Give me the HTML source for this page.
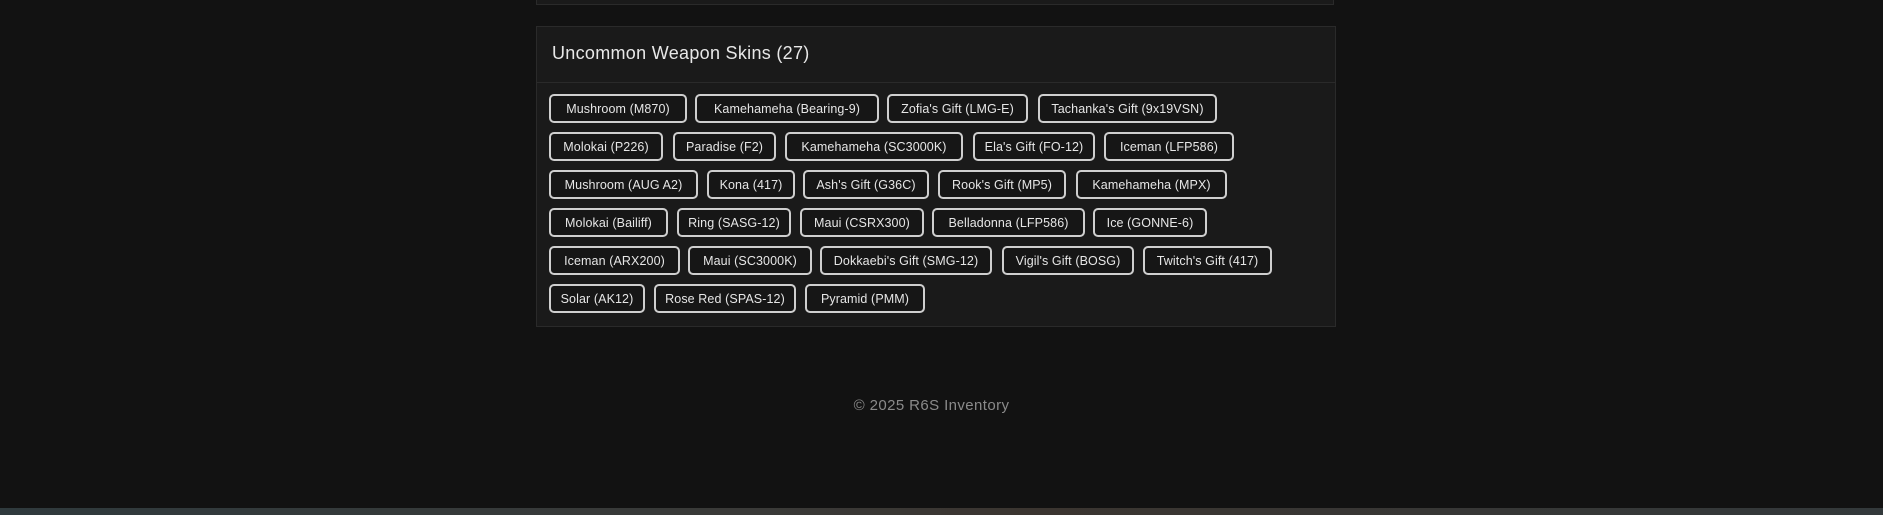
<!DOCTYPE html>
<html><head><meta charset="utf-8"><style>
html,body{margin:0;padding:0;width:1883px;height:515px;background:#121212;overflow:hidden;font-family:"Liberation Sans",sans-serif;}
.prev{position:absolute;left:536px;top:-10px;width:798px;height:15px;background:#1a1a1a;border:1px solid #2a2a2a;box-sizing:border-box;}
.card{position:absolute;left:536px;top:26px;width:800px;height:301px;background:#1a1a1a;border:1px solid #2a2a2a;box-sizing:border-box;}
.hdr{position:absolute;left:0;top:0;right:0;height:55px;border-bottom:1px solid #2a2a2a;}
.hdr span{position:absolute;left:15px;top:16px;font-size:18px;letter-spacing:0.3px;color:#e8e8e8;}
.t{position:absolute;height:29px;box-sizing:border-box;border:2px solid #cfcfcf;border-radius:5px;color:#e6e6e6;font-size:12.5px;letter-spacing:0.1px;display:flex;align-items:center;justify-content:center;white-space:nowrap;background:#161616;}
.foot{position:absolute;left:-10px;width:1883px;top:397px;text-align:center;color:#8a8a8a;font-size:15px;letter-spacing:0.4px;}
.strip{position:absolute;left:0;top:508px;width:1883px;height:7px;background:linear-gradient(90deg,#2f3a3d,#3a3a38 40%,#3b3530 55%,#33393b);}
</style></head><body>
<div class="prev"></div>
<div class="card"><div class="hdr"><span>Uncommon Weapon Skins (27)</span></div></div>
<div class="t" style="left:549px;top:94px;width:138px">Mushroom (M870)</div>
<div class="t" style="left:695px;top:94px;width:184px">Kamehameha (Bearing-9)</div>
<div class="t" style="left:887px;top:94px;width:141px">Zofia's Gift (LMG-E)</div>
<div class="t" style="left:1038px;top:94px;width:179px">Tachanka's Gift (9x19VSN)</div>
<div class="t" style="left:549px;top:132px;width:114px">Molokai (P226)</div>
<div class="t" style="left:673px;top:132px;width:103px">Paradise (F2)</div>
<div class="t" style="left:785px;top:132px;width:178px">Kamehameha (SC3000K)</div>
<div class="t" style="left:973px;top:132px;width:122px">Ela's Gift (FO-12)</div>
<div class="t" style="left:1104px;top:132px;width:130px">Iceman (LFP586)</div>
<div class="t" style="left:549px;top:170px;width:149px">Mushroom (AUG A2)</div>
<div class="t" style="left:707px;top:170px;width:88px">Kona (417)</div>
<div class="t" style="left:803px;top:170px;width:126px">Ash's Gift (G36C)</div>
<div class="t" style="left:938px;top:170px;width:128px">Rook's Gift (MP5)</div>
<div class="t" style="left:1076px;top:170px;width:151px">Kamehameha (MPX)</div>
<div class="t" style="left:549px;top:208px;width:119px">Molokai (Bailiff)</div>
<div class="t" style="left:677px;top:208px;width:114px">Ring (SASG-12)</div>
<div class="t" style="left:800px;top:208px;width:124px">Maui (CSRX300)</div>
<div class="t" style="left:932px;top:208px;width:153px">Belladonna (LFP586)</div>
<div class="t" style="left:1093px;top:208px;width:114px">Ice (GONNE-6)</div>
<div class="t" style="left:549px;top:246px;width:131px">Iceman (ARX200)</div>
<div class="t" style="left:688px;top:246px;width:124px">Maui (SC3000K)</div>
<div class="t" style="left:820px;top:246px;width:172px">Dokkaebi's Gift (SMG-12)</div>
<div class="t" style="left:1002px;top:246px;width:132px">Vigil's Gift (BOSG)</div>
<div class="t" style="left:1143px;top:246px;width:129px">Twitch's Gift (417)</div>
<div class="t" style="left:549px;top:284px;width:96px">Solar (AK12)</div>
<div class="t" style="left:654px;top:284px;width:142px">Rose Red (SPAS-12)</div>
<div class="t" style="left:805px;top:284px;width:120px">Pyramid (PMM)</div>
<div class="foot">© 2025 R6S Inventory</div>
<div class="strip"></div>
</body></html>
